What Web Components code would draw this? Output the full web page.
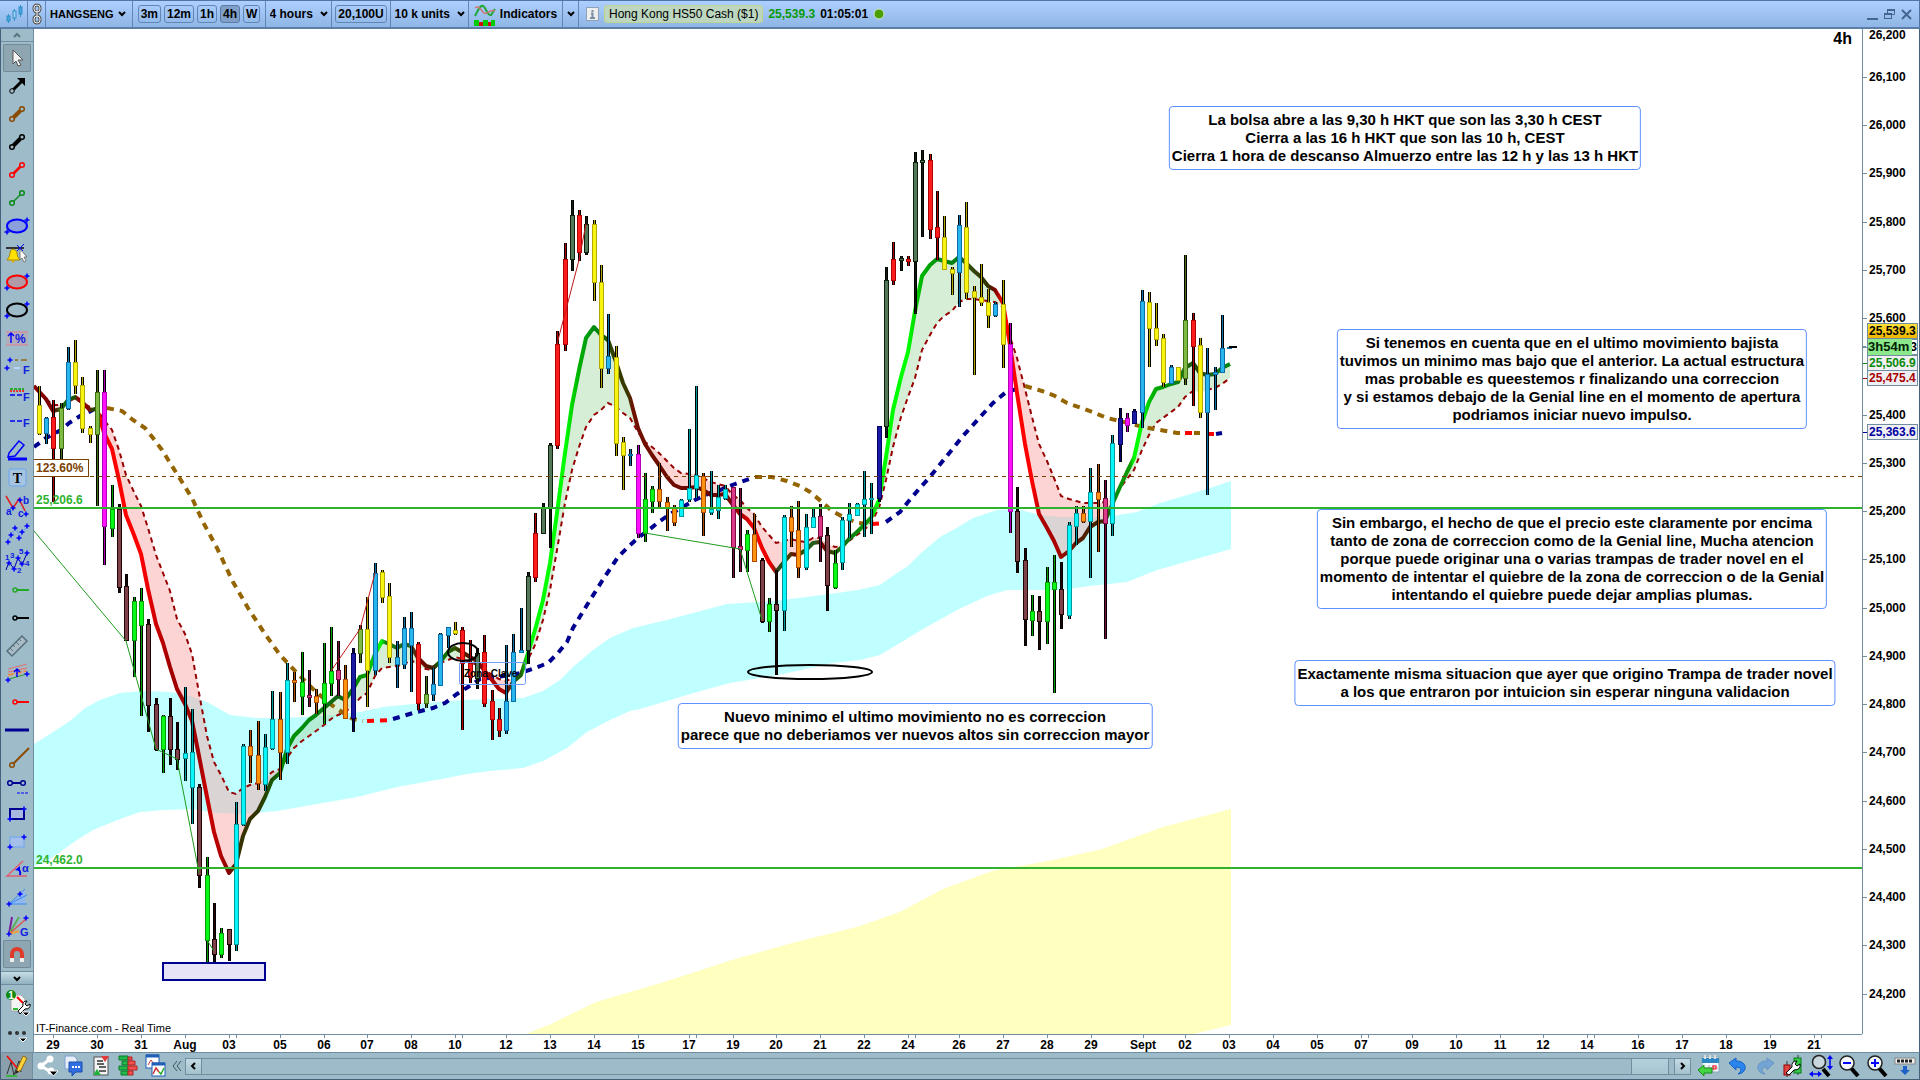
<!DOCTYPE html>
<html lang="en">
<head>
<meta charset="utf-8">
<title>HANGSENG 4h</title>
<style>
body {
    margin: 0;
    min-height: 100vh;
    display: grid;
    grid-template-columns: 34px 1fr;
    grid-template-rows: 29px 1fr 28px;
    font-family: "Liberation Sans", Arial, sans-serif;
    font-size: 12px;
    color: #000;
    --panel: #9dbbc8;
    --line: #718da0;
    --edge: #46607a;
}
title-bar, status-bar { grid-column: 1 / -1; }
</style>
</head>
<body>
<title-bar></title-bar>
<tool-palette></tool-palette>
<price-chart>
    <chart-note x="1405" y="106">La bolsa abre a las 9,30 h HKT que son las 3,30 h CEST<br>Cierra a las 16 h HKT que son las 10 h, CEST<br>Cierra 1 hora de descanso Almuerzo entre las 12 h y las 13 h HKT</chart-note>
    <chart-note x="1572" y="329">Si tenemos en cuenta que en el ultimo movimiento bajista<br>tuvimos un minimo mas bajo que el anterior. La actual estructura<br>mas probable es queestemos r finalizando una correccion<br>y si estamos debajo de la Genial line en el momento de apertura<br>podriamos iniciar nuevo impulso.</chart-note>
    <chart-note x="1572" y="509">Sin embargo, el hecho de que el precio este claramente por encima<br>tanto de zona de correccion como de la Genial line, Mucha atencion<br>porque puede originar una o varias trampas de trader novel en el<br>momento de intentar el quiebre de la zona de correccion o de la Genial<br>intentando el quiebre puede dejar amplias plumas.</chart-note>
    <chart-note x="915" y="703">Nuevo minimo el ultimo movimiento no es correccion<br>parece que no deberiamos ver nuevos altos sin correccion mayor</chart-note>
    <chart-note x="1565" y="660">Exactamente misma situacion que ayer que origino Trampa de trader novel<br>a los que entraron por intuicion sin esperar ninguna validacion</chart-note>
</price-chart>
<status-bar></status-bar>

<template id="title-bar">
<style>
:host {
    display: flex;
    align-items: stretch;
    box-sizing: border-box;
    border-top: 1px solid #4f74a8;
    border-bottom: 2px solid #5b7ea6;
    border-right: 1px solid #4f74a8;
    background: linear-gradient(#adcfff, #8fb6e6);
    font-weight: bold;
    white-space: nowrap;
}
.cell {
    display: flex;
    align-items: center;
    justify-content: center;
    gap: 4px;
    flex: none;
    box-sizing: border-box;
    border-right: 1px solid #5f86b4;
}
button, select {
    font: inherit;
    color: inherit;
    background: none;
    border: 0;
    margin: 0;
    padding: 0;
}
svg { display: block; }
.icon { width: 28px; }
.link { width: 18px; }
.pick { display: grid; align-items: center; padding: 0 4px; }
.pick select, .pick svg { grid-area: 1 / 1; }
.pick select { appearance: none; padding-right: 14px; }
.pick svg { justify-self: end; pointer-events: none; }
.name { font-size: 11px; width: 87px; }
.name svg { margin-right: 2px; }
.frames { gap: 3px; }
.frame {
    height: 18px;
    padding: 0 2px;
    border: 1px solid #5f86b4;
    border-radius: 3px;
}
.frame.on { background: #819fc6; border-color: #5a7ca8; }
.spans { width: 133px; }
.span { width: 66px; }
.units { width: 59px; }
.depth { width: 78px; }
.ind { width: 94px; }
.more { width: 16px; }
.quote { display: flex; align-items: center; gap: 5px; padding-left: 7px; flex: 1; }
.quote .product {
    font-weight: normal;
    height: 16px;
    line-height: 16px;
    padding: 0 4px;
    border: 1px solid #bfd48c;
    border-radius: 3px;
    background: #bcd6c0;
}
.last { color: #0a9a0a; }
.win { display: flex; align-items: center; gap: 4px; padding-right: 6px; }
</style>
<button class="cell icon" aria-label="Chart type"><svg width="18" height="22"><g stroke="#2f8fca" fill="#4aa3d6"><path d="M3.5 11v9M9.5 6v12M15.5 2v12"/><rect x="2" y="13" width="3" height="5"/><rect x="8" y="8" width="3" height="7" fill="#9fd0ee"/><rect x="14" y="4" width="3" height="7"/></g></svg></button>
<button class="cell link" aria-label="Link"><svg width="12" height="22" fill="none"><g stroke="#555" stroke-width="3"><rect x="3" y="2" width="6" height="7" rx="3"/><rect x="3" y="13" width="6" height="7" rx="3"/><path d="M6 7v8"/></g><g stroke="#eee" stroke-width="1"><rect x="3" y="2" width="6" height="7" rx="3"/><rect x="3" y="13" width="6" height="7" rx="3"/><path d="M6 7v8"/></g></svg></button>
<div class="cell pick name"><select aria-label="Instrument"><option>HANGSENG</option></select><svg width="8" height="6"><path d="M1 1l3 3 3-3" fill="none" stroke="#000" stroke-width="2"/></svg></div>
<div class="cell frames spans"><button class="frame">3m</button><button class="frame">12m</button><button class="frame">1h</button><button class="frame on">4h</button><button class="frame">W</button></div>
<div class="cell pick span"><select aria-label="Timeframe"><option>4 hours</option></select><svg width="8" height="6"><path d="M1 1l3 3 3-3" fill="none" stroke="#000" stroke-width="2"/></svg></div>
<div class="cell frames units"><button class="frame">20,100U</button></div>
<div class="cell pick depth"><select aria-label="History"><option>10 k units</option></select><svg width="8" height="6"><path d="M1 1l3 3 3-3" fill="none" stroke="#000" stroke-width="2"/></svg></div>
<button class="cell ind"><svg width="22" height="24"><path d="M1 14C4 8 6 3 9 4s4 10 8 9l4-6" fill="none" stroke="#22a83a" stroke-width="2"/><path d="M1 6c4-3 6 2 9 5s6-5 11-2" fill="none" stroke="#c77" stroke-width="1.5"/><path d="M0 18h5v2h4v-2h5v2h3v-2h4v6H0z" fill="#0c0"/><path d="M5 20h4v4H5zM14 20h3v4h-3z" fill="#c11"/></svg>Indicators</button>
<button class="cell more" aria-label="More indicators"><svg width="8" height="6"><path d="M1 1l3 3 3-3" fill="none" stroke="#000" stroke-width="2"/></svg></button>
<div class="quote">
    <svg width="13" height="14"><rect x=".5" y=".5" width="12" height="13" fill="#eee" stroke="#8fa3b8"/><path d="M6.5 3v2M5 6.5h1.5v4M4 11h5" stroke="#7b8ea3" stroke-width="2" fill="none"/></svg>
    <span class="product">Hong Kong HS50 Cash ($1)</span>
    <span class="last">25,539.3</span>
    <span>01:05:01</span>
    <svg width="12" height="12"><circle cx="6" cy="6" r="5" fill="#4aa000" stroke="#cfe6cf"/></svg>
</div>
<div class="win">
    <button aria-label="Minimise"><svg width="13" height="13"><path d="M1 11h11" stroke="#44658f" stroke-width="2"/></svg></button>
    <button aria-label="Restore"><svg width="13" height="13" fill="none" stroke="#44658f"><path d="M4.5 5V1.5h7v5H9" /><path d="M4 2h8" stroke-width="2"/><rect x="1.5" y="5.5" width="7" height="5"/><path d="M1 6h8" stroke-width="2"/></svg></button>
    <button aria-label="Close"><svg width="13" height="13"><path d="M2 2l9 9M11 2l-9 9" stroke="#44658f" stroke-width="2"/></svg></button>
</div>
</template>

<template id="tool-palette">
<style>
:host {
    display: flex;
    flex-direction: column;
    box-sizing: border-box;
    background: var(--panel);
    border-left: 1px solid var(--edge);
    border-right: 1px solid var(--line);
}
button {
    font: inherit;
    background: none;
    border: 0;
    padding: 0;
    display: grid;
    place-items: center;
}
svg { display: block; overflow: visible; }
.up { height: 13px; border-bottom: 1px solid var(--line); }
.tools { display: grid; grid-auto-rows: 28px; padding: 2px 2px 3px; }
.tools button.on {
    background: #8ea5b2;
    box-shadow: inset 0 0 0 1px #718b9b;
    border-radius: 2px;
}
.down {
    height: 14px;
    background: linear-gradient(#c8dde6, #8fb0be);
    border-top: 1px solid var(--line);
    border-bottom: 1px solid var(--line);
}
.style { height: 36px; }
.dots { flex: 1; }
</style>
<button class="up" aria-label="Scroll up"><svg width="8" height="5"><path d="M1 4l3-3 3 3" fill="none" stroke="#5b7482" stroke-width="2"/></svg></button>
<div class="tools"></div>
<button class="down" aria-label="Scroll down"><svg width="8" height="5"><path d="M1 1l3 3 3-3" fill="none" stroke="#000" stroke-width="2"/></svg></button>
<button class="style" aria-label="Object list"><svg width="28" height="28"><path d="M8 6h10l4 4v12H8z" fill="#f4f4f4" stroke="#aaa"/><path d="M14 8l6 6" stroke="red" stroke-width="2"/><path d="M10 20h5" stroke="#3b3" stroke-width="2"/><path d="M15 22l5-5q-1-5 4-5l-2 3 2 2 3-2q1 5-5 5l-5 5z" fill="#fff" stroke="#000"/><circle cx="8" cy="6" r="5" fill="#118a11"/><text x="8" y="10" font-size="10" font-weight="bold" fill="#fff" text-anchor="middle">1</text><path d="M19 23h8l-4 4z" fill="#000" stroke="#fff"/></svg></button>
<button class="dots" aria-label="More tools"><svg width="28" height="20"><g fill="#333"><circle cx="7" cy="6" r="2"/><circle cx="14" cy="6" r="2"/><circle cx="21" cy="6" r="2"/></g><path d="M16 11h8l-4 4z" fill="#000" stroke="#fff"/></svg></button>
</template>

<template id="status-bar">
<style>
:host {
    display: flex;
    align-items: center;
    box-sizing: border-box;
    background: var(--panel);
    border: 1px solid var(--edge);
    border-top-color: var(--line);
}
button {
    font: inherit;
    background: none;
    border: 0;
    padding: 0;
    width: 27px;
    height: 26px;
    display: grid;
    place-items: center;
    flex: none;
}
svg { display: block; overflow: visible; }
.draw { width: 32px; background: #8aa0ad; border-right: 1px solid var(--line); }
.fold { width: 17px; }
.right button { width: 28px; }
.right { display: flex; padding: 0 0 0 4px; }
.scroll {
    flex: 1;
    display: flex;
    justify-content: space-between;
    box-sizing: border-box;
    height: 17px;
    border: 1px solid var(--line);
    background: var(--panel);
}
.scroll button {
    width: 16px;
    height: 15px;
    background: linear-gradient(#c3dae3, #a3c1cd);
    border-right: 1px solid var(--line);
}
.scroll button:last-child { border-right: 0; border-left: 1px solid var(--line); }
.thumb {
    width: 36px;
    margin-left: auto;
    margin-right: 5px;
    border: 1px solid var(--line);
    border-width: 0 1px;
    background: linear-gradient(#b4d0dc, #a6c4d1);
}
</style>
<button class="draw" aria-label="Drawing tools"><svg width="24" height="24"><path d="M2 20l4-12 3 13 5-14 2 11" fill="none" stroke="#333"/><path d="M2 2l10 12" stroke="red" stroke-width="1.5"/><path d="M1 22h11" stroke="#2b2" stroke-width="1.5"/><path d="M11 19l2-6 5-11 4 2-6 12z" fill="#ffd23c" stroke="#8a6a10"/><path d="M10 20l1-4 3 2z" fill="#222"/></svg></button>
<button aria-label="Share"><svg width="22" height="24"><path d="M14 5L5 12l10 6" fill="none" stroke="#fff" stroke-width="3"/><g fill="#fff"><circle cx="14" cy="5" r="3.5"/><circle cx="5" cy="12" r="3.5"/><circle cx="15" cy="17" r="3.5"/></g><path d="M13 17h9l-4.5 5z" fill="#000" stroke="#fff"/></svg></button>
<button aria-label="Chat"><svg width="22" height="24"><path d="M2 2h9l3 3v10H2z" fill="#e8eef8" stroke="#7b9fd0"/><path d="M6 8h13v10h-6l-4 4v-4H6z" fill="#2f6fe0" stroke="#1c4fb0"/><path d="M9 13h2M12 13h2M15 13h2" stroke="#fff" stroke-width="2"/></svg></button>
<button aria-label="Orders"><svg width="20" height="24"><rect x="3" y="3" width="14" height="18" fill="#f3f3f3" stroke="#555"/><path d="M6 7h6M6 10h7M8 13h7M8 17h7" stroke="#333" stroke-width="1.5"/><path d="M10 2h8l-4 6z" fill="#e23b3b"/><path d="M2 21h8l-4-6z" fill="#22b23a"/></svg></button>
<button aria-label="Order book"><svg width="20" height="24"><path d="M1 2h9v4H1zM4 7h6v4H4zM1 12h9v4H1zM3 17h7v4H3z" fill="#22b84a" stroke="#0b7a2a"/><path d="M10 3h4v3h-4zM10 7h7v4h-7zM10 12h9v4h-9zM10 17h5v4h-5z" fill="#f05050" stroke="#b02020"/></svg></button>
<button aria-label="Windows"><svg width="22" height="24"><rect x="2" y="1" width="13" height="13" fill="#fff" stroke="#1f5fb8"/><path d="M2 2h13" stroke="#1f5fb8" stroke-width="3"/><path d="M4 11l3-5 3 4" fill="none" stroke="#c33"/><rect x="8" y="9" width="13" height="13" fill="#fff" stroke="#1f5fb8"/><path d="M8 10h13" stroke="#1f5fb8" stroke-width="3"/><path d="M9 20l3-6 3 4" fill="none" stroke="#c33" stroke-width="1.5"/><path d="M15 18l2 2 3-6" fill="none" stroke="#2a2" stroke-width="1.5"/></svg></button>
<button class="fold" aria-label="Collapse"><svg width="10" height="10"><path d="M5 0L1 5l4 5M9 0L5 5l4 5" fill="none" stroke="#3d5360"/></svg></button>
<div class="scroll">
    <button aria-label="Scroll left"><svg width="6" height="8"><path d="M4 1L1 4l3 3" fill="none" stroke="#000" stroke-width="2"/></svg></button>
    <div class="thumb"></div>
    <button aria-label="Scroll right"><svg width="6" height="8"><path d="M1 1l3 3-3 3" fill="none" stroke="#000" stroke-width="2"/></svg></button>
</div>
<div class="right">
    <button aria-label="Go to date"><svg width="24" height="24"><rect x="5" y="3" width="17" height="15" fill="#f4f8fb" stroke="#8ab"/><path d="M5 4h17v5H5z" fill="#2c86c4"/><path d="M8 1v4M13 1v4M18 1v4" stroke="#ddd" stroke-width="2"/><path d="M12 11v7M16 11v7M7 14h14" stroke="#aac"/><rect x="16" y="12" width="3" height="3" fill="none" stroke="red"/><path d="M1 16l6-5v3h8v5H7v3z" fill="#44d444" stroke="#189018"/></svg></button>
    <button aria-label="Undo"><svg width="18" height="20"><path d="M1 7l7-5v3c8 0 10 5 9 8s-4 5-7 5c4-3 4-7-2-7v3z" fill="#2a86ee" stroke="#1560c0"/></svg></button>
    <button aria-label="Redo"><svg width="18" height="20" opacity=".5"><path d="M18 7l-7-5v3c-8 0-10 5-9 8s4 5 7 5c-4-3-4-7 2-7v3z" fill="#4a8ee0" stroke="#3570c0"/></svg></button>
    <button aria-label="Chart settings"><svg width="22" height="24"><path d="M5 7v16M16 1v20" stroke="#333"/><rect x="2" y="11" width="6" height="10" fill="#e04444" stroke="#900"/><rect x="12" y="4" width="7" height="15" fill="#33c944" stroke="#0a7a1a"/><path d="M4 19l6-6q-1-6 5-6l-2 3 2 2 3-2q1 6-6 6l-5 5z" fill="#fff" stroke="#000"/></svg></button>
    <button aria-label="Fit"><svg width="24" height="24"><path d="M14 15l6 7" stroke="#000" stroke-width="4"/><circle cx="10" cy="8" r="6.5" fill="#c9d8df" stroke="#222" stroke-width="1.5"/><path d="M21 4v9M3 20h8" stroke="#00f" stroke-width="1.5"/><path d="M18 5l3-4 3 4zM18 12l3 4 3-4zM4 17l-4 3 4 3zM9 17l4 3-4 3z" fill="#00f"/></svg></button>
    <button aria-label="Zoom out"><svg width="22" height="24"><path d="M13 14l7 8" stroke="#000" stroke-width="4"/><circle cx="9" cy="9" r="7" fill="#f2f6f8" stroke="#222" stroke-width="1.5"/><path d="M5 9h8" stroke="#00f" stroke-width="2"/></svg></button>
    <button aria-label="Zoom in"><svg width="22" height="24"><path d="M13 14l7 8" stroke="#000" stroke-width="4"/><circle cx="9" cy="9" r="7" fill="#f2f6f8" stroke="#222" stroke-width="1.5"/><path d="M5 9h8M9 5v8" stroke="#00f" stroke-width="2"/></svg></button>
    <button aria-label="Toolbar options"><svg width="20" height="20"><rect x="0" y="2" width="20" height="6" fill="#eee" stroke="#888"/><path d="M2 5h16" stroke="#222" stroke-width="3" stroke-dasharray="3 1"/><path d="M8 10h4v4h3l-5 5-5-5h3z" fill="#1f62c8"/></svg></button>
</div>
</template>

<template id="price-chart">
<style>
:host {
    display: grid;
    grid-template-columns: 1fr 58px;
    grid-template-rows: 1fr 18px;
    background: #fff;
    font-weight: bold;
}
.plot { position: relative; overflow: hidden; }
.plot svg { position: absolute; inset: 0; width: 100%; height: 100%; }
.frame { position: absolute; top: 0; right: 10px; font-size: 16px; line-height: 20px; }
.credit { position: absolute; left: 2px; bottom: 0; font-size: 11px; font-weight: normal; line-height: 12px; }
.level { position: absolute; left: 2px; line-height: 14px; transform: translateY(-100%); color: #2fb32f; }
.fib {
    position: absolute;
    left: 0;
    padding: 0 5px 0 2px;
    line-height: 16px;
    color: #7a4000;
    background: #fff;
    border: 1px solid #7a4000;
    border-left: 0;
}
.prices { position: relative; border-left: 1px solid var(--line); border-right: 1px solid var(--edge); }
.prices span { position: absolute; left: 6px; line-height: 14px; transform: translateY(-50%); }
.prices span::before {
    content: "";
    position: absolute;
    left: -6px;
    top: 7px;
    width: 4px;
    height: 1px;
    background: var(--tick, #718da0);
}
.prices span.first { top: 0; line-height: 12px; transform: none; }
.prices span.first::before { display: none; }
.prices span.tag {
    left: 4px;
    right: 1px;
    padding-left: 1px;
    border: 1px solid #718da0;
    background: #f0f0f4;
}
.prices span.tag::before { left: -5px; }
.prices span.now { background: linear-gradient(#ffe23a, #f0b400); }
.prices span.now::before { display: none; }
.prices span.rest { background: #fff; text-align: right; }
.prices span.timer {
    left: 5px;
    right: 7px;
    font-size: 13px;
    line-height: 16px;
    background: #8be88b;
    color: #002000;
}
.times { grid-column: 1 / -1; display: grid; grid-template-columns: 1fr 58px; }
.times .row { position: relative; border-top: 1px solid var(--line); }
.times .row + .row { border-top: 0; border-right: 1px solid var(--edge); }
.times span { position: absolute; top: 3px; line-height: 14px; transform: translateX(-50%); }
.times i { position: absolute; top: 0; width: 1px; height: 3px; background: var(--line); }
</style>
<div class="plot">
    <svg viewBox="34 29 1828 1005" preserveAspectRatio="none"></svg>
    <div class="frame">4h</div>
    <div class="credit">IT-Finance.com - Real Time</div>
    <slot></slot>
</div>
<div class="prices"></div>
<div class="times"><div class="row"></div><div class="row"></div></div>
</template>

<template id="chart-note">
<style>
:host {
    position: absolute;
    transform: translateX(-50%);
    box-sizing: border-box;
    padding: 4px 2px;
    border: 1px solid #5c8fff;
    border-radius: 4px;
    background: #fff;
    font-size: 15px;
    font-weight: bold;
    line-height: 18px;
    text-align: center;
    white-space: nowrap;
}
</style>
<slot></slot>
</template>

<script>
// plot extents, in chart units
const PLOT = { x: 34, y: 29, w: 1828, h: 1005 };
const pctX = x => ((x - PLOT.x) / PLOT.w * 100) + '%';
const pctY = y => ((y - PLOT.y) / PLOT.h * 100) + '%';
const priceY = p => 125 + (26000 - p) * 0.4826;

class Base extends HTMLElement {
    constructor() {
        super();
        const template = document.getElementById(this.localName);
        this.attachShadow({ mode: 'open' }).appendChild(template.content.cloneNode(true));
    }
    $(sel) { return this.shadowRoot.querySelector(sel); }
}

class TitleBar extends Base {}
class StatusBar extends Base {}

// ---- drawing tools ----
const plus = (x, y, c = '#00f') => `<path d="M${x - 2.5} ${y}h5M${x} ${y - 2.5}v5" stroke="${c}" stroke-width="1.5"/>`;
const segment = (c, w) => `<path d="M10 18L19 9" stroke="${c}" stroke-width="${w}"/><g fill="#9dbbc8" stroke="${c}" stroke-width="1.5"><circle cx="9" cy="19" r="2.3"/><circle cx="19" cy="9" r="2.3"/></g>`;
const oval = (c, f) => `<ellipse cx="14" cy="14" rx="10" ry="6.5" fill="${f}" stroke="${c}" stroke-width="2"/>${plus(24, 8)}${plus(4, 20)}`;
const ray = c => `<path d="M14 14h12" stroke="${c}" stroke-width="2"/><circle cx="12" cy="14" r="2" fill="none" stroke="${c}" stroke-width="1.5"/>`;
const glyph = (x, y, t, s = 10, c = '#1020e0') => `<text x="${x}" y="${y}" font-size="${s}" font-weight="bold" fill="${c}">${t}</text>`;

const TOOLS = [
    ['Cursor', '<path d="M10 6v14l3-3 2 5 3-1-3-5h5z" fill="#f4f4f4" stroke="#555"/>', true],
    ['Arrow', '<path d="M10 18L19 9" stroke="#000" stroke-width="3"/><path d="M14 6h8v8z"/><circle cx="9" cy="19" r="2.3" fill="#9dbbc8" stroke="#000"/>'],
    ['Segment 1', segment('#8a4a00', 4)],
    ['Segment 2', segment('#000', 4)],
    ['Segment 3', segment('#f00', 2.5)],
    ['Segment 4', segment('#0a8a1a', 1.5)],
    ['Ellipse 1', oval('#00f', '#8aa0dc')],
    ['Alert', '<path d="M3 8h18" stroke="#333" stroke-width="2"/><path d="M4 20q3-3 3-7 0-3 3-4 4 1 4 4 0 4 3 7z" fill="#ffe000" stroke="#a80"/><circle cx="10" cy="21" r="1.5" fill="#da0"/><path d="M14 5l6 6M21 4l-7 7" stroke="#00f"/><path d="M17 9v11l2-2 2 4 2-1-2-4h3z" fill="#fff" stroke="#777"/>'],
    ['Ellipse 2', oval('#f00', '#b09aa6')],
    ['Ellipse 3', oval('#000', 'none')],
    ['Variation', '<rect x="3" y="8" width="22" height="13" fill="#b0aebd"/><path d="M3 8h22M3 21h22" stroke="#e0808c"/><path d="M8 19v-9M5 12l3-3 3 3" stroke="#00f" stroke-width="1.5" fill="none"/>' + glyph(12, 19, '%', 12)],
    ['Fibonacci 1', plus(7, 8) + plus(4, 16) + '<path d="M12 8h3M18 8h6" stroke="#96661a" stroke-width="1.5"/><path d="M11 16h6" stroke="#b6d4ff" stroke-width="2"/>' + glyph(20, 22, 'F', 11)],
    ['Fibonacci 2', '<path d="M7 9h14" stroke="#0a0" stroke-width="1.5" stroke-dasharray="3 1"/><path d="M7 11h14" stroke="#f00" stroke-width="1.5" stroke-dasharray="2 1"/><path d="M7 15h5M14 15h5" stroke="#00f" stroke-width="1.5"/>' + glyph(20, 21, 'F', 11)],
    ['Fibonacci 3', '<path d="M7 13h5M14 13h5" stroke="#00f" stroke-width="1.5"/>' + glyph(20, 19, 'F', 11)],
    ['Pencil', '<path d="M6 17L16 5l5 4-9 11-7 1z" fill="#9dbbc8" stroke="#00f" stroke-width="1.5"/><path d="M5 23h19" stroke="#00f" stroke-width="3"/>'],
    ['Text', '<rect x="6" y="5" width="17" height="17" rx="2" fill="#a5c4e0" stroke="#6fa4f0"/><text x="14.5" y="19" font-size="14" font-weight="bold" text-anchor="middle" font-family="Liberation Serif, serif">T</text>'],
    ['Waves abc', '<path d="M3 4l7 12 6-9 6 12" fill="none" stroke="#e02020" stroke-width="1.5"/>' + plus(10, 16) + plus(17, 8) + glyph(3, 23, 'a') + glyph(20, 12, 'b') + glyph(15, 25, 'c') + plus(23, 22)],
    ['Polyline', '<path d="M4 22l4-7 5-7 4 10 3-7 5-5" fill="none" stroke="#6f9cf0"/>' + plus(5, 22) + plus(8, 15) + plus(12, 8) + plus(16, 18) + plus(19, 12) + plus(24, 6)],
    ['Waves 12345', '<path d="M3 22l3-8 5 7 4-11 4 7 5-12" fill="none" stroke="#00a"/>' + plus(6, 15) + plus(11, 21) + plus(15, 10) + plus(19, 16) + plus(24, 5) + glyph(2, 12, 1, 8) + glyph(7, 10, 3, 8) + glyph(16, 6, 5, 8) + glyph(14, 25, 2, 8) + glyph(22, 18, 4, 8)],
    ['Ray 1', ray('#22aa22')],
    ['Ray 2', ray('#000')],
    ['Ruler', '<path d="M4 19L19 4l5 5L9 24z" fill="#a9bcc6" stroke="#56707e" stroke-width="1.5"/><path d="M7 16l3 3M10 13l2 2M13 10l3 3M16 7l2 2" stroke="#56707e"/>'],
    ['Channel', '<path d="M4 18L24 13V6L5 11z" fill="#b0b4bb"/><path d="M5 9l19-5M5 12l19-4" stroke="#e07070"/><path d="M5 15l18-4" stroke="#f08a30" stroke-width="1.5" stroke-dasharray="6 2"/><path d="M6 19l18-5" stroke="#2b9a2b"/><path d="M14 17V9M11 12l3-3 3 3" stroke="#00f" stroke-width="1.5" fill="none"/>' + plus(5, 20) + plus(24, 14)],
    ['Ray 3', ray('#f00')],
    ['Horizontal line', '<path d="M2 14h24" stroke="#000090" stroke-width="3"/>'],
    ['Half line', '<path d="M10 20L26 4" stroke="#8a4a00" stroke-width="2"/><circle cx="9" cy="21" r="2.3" fill="none" stroke="#8a4a00" stroke-width="1.5"/>'],
    ['Horizontal segment', '<path d="M9 11h9" stroke="#000090" stroke-width="2"/><g fill="none" stroke="#000090" stroke-width="1.5"><circle cx="7" cy="11" r="2.3"/><circle cx="20" cy="11" r="2.3"/></g><path d="M14 21h12" stroke="#00f" stroke-dasharray="3 1"/>'],
    ['Rectangle 1', '<rect x="7" y="9" width="14" height="10" fill="#a8b8e0" stroke="#000090" stroke-width="2"/>' + plus(21, 9) + plus(7, 19)],
    ['Rectangle 2', '<rect x="7" y="9" width="14" height="10" fill="#a5c0e8" stroke="#6fa4f0"/>' + plus(21, 9) + plus(7, 19)],
    ['Angle', '<path d="M20 5L4 20h20" fill="none" stroke="#e06070" stroke-width="1.5"/><path d="M17 19q1-4-2-6" fill="none" stroke="#00f" stroke-width="2"/><path d="M12 14l5-4v5z" fill="#00f"/>' + glyph(19, 16, 'α', 11)],
    ['Fan', '<path d="M6 20L22 6v14z" fill="#8fb8ee"/><path d="M6 20L22 5M6 20l18-9M6 20h18" stroke="#3c8cf0"/>' + plus(6, 20) + plus(17, 10)],
    ['Gann fan', '<path d="M6 22L9 5" stroke="#7a20a0" stroke-width="2"/><path d="M6 22l10-17" stroke="#5ab05a" stroke-width="2"/><path d="M6 22L23 7" stroke="#e05050" stroke-width="1.5"/><path d="M6 22l10-3" stroke="#f0a030" stroke-width="2"/>' + plus(6, 22) + plus(23, 6) + glyph(17, 24, 'G', 11)],
    ['Magnet', '<path d="M9 21v-7a5 5 0 0 1 10 0v7" fill="none" stroke="#e03a2a" stroke-width="4"/><path d="M9 18v4M19 18v4" stroke="#eee" stroke-width="4"/>', true]
];

class ToolPalette extends Base {
    connectedCallback() {
        this.$('.tools').innerHTML = TOOLS.map(([name, art, on]) =>
            `<button aria-label="${name}"${on ? ' class="on"' : ''}><svg width="28" height="28" viewBox="0 0 28 28">${art}</svg></button>`).join('');
    }
}

class ChartNote extends Base {
    connectedCallback() {
        this.style.left = pctX(+this.getAttribute('x'));
        this.style.top = pctY(+this.getAttribute('y'));
    }
}

// ---- chart data ----
// fill, border, wick core
const PAINT = {
    Y: ['#f7f412', '#b5a800', '#b5a800'],
    B: ['#27b5ee', '#0b6ea6', '#0b6ea6'],
    R: ['#ff1c1c', '#b00000', '#b00000'],
    G: ['#7fba45', '#3f7010', '#3f7010'],
    M: ['#ff10ff', '#b400b4', '#b400b4'],
    L: ['#08f818', '#00a000', '#00a000'],
    W: ['#80424a', '#200505', '#200505'],
    C: ['#08f6fa', '#009a9e', '#009a9e'],
    O: ['#ff920f', '#b04c00', '#b04c00'],
    P: ['#dc3a88', '#7a0a40', '#7a0a40'],
    N: ['#1a1aa4', '#000060', '#000060'],
    D: ['#55785a', '#0c200c', '#0c200c']
};

// x, high, body top, body bottom, low, paint
const CANDLES = `39 386 405 433 435 Y|46 417 418 433 444 B|53 400 417 448 502 R|61 403 408 448 463 G|68 347 362 408 410 B|75 340 362 385 394 Y|82 377 385 428 433 Y|90 426 428 434 443 Y|97 370 392 434 506 G|104 370 392 526 565 M|112 485 509 528 537 L|119 504 509 587 593 W|126 574 586 640 641 W|134 597 601 640 677 L|141 588 601 625 716 L|148 619 624 705 732 W|156 698 704 749 751 W|163 715 716 749 773 L|170 698 716 749 765 W|177 722 749 759 770 W|185 687 753 758 781 C|192 709 752 787 824 C|199 784 787 875 888 W|207 857 875 940 968 L|214 903 939 954 970 W|221 928 933 954 958 L|229 929 929 944 961 W|236 802 824 944 951 C|243 744 746 824 826 C|250 730 746 755 783 O|258 721 755 783 790 O|265 734 747 784 791 C|272 691 719 748 750 C|280 692 719 752 780 O|287 663 680 752 764 C|294 672 680 682 702 O|302 652 682 696 715 L|309 670 695 697 707 P|316 689 696 702 714 O|324 643 683 703 724 L|331 627 671 683 696 L|338 641 670 679 696 P|345 665 679 718 719 O|353 648 653 718 732 N|360 625 629 653 663 G|367 597 629 670 707 Y|375 563 573 670 675 B|382 570 572 597 603 Y|389 583 596 657 663 Y|397 641 657 664 688 B|404 617 628 664 669 B|411 612 628 645 692 B|418 642 644 703 710 R|426 676 694 703 708 G|433 668 684 694 701 B|440 633 634 685 686 B|448 627 627 635 648 B|455 622 630 633 635 Y|462 627 630 663 730 R|470 640 663 677 683 R|477 648 653 678 689 D|484 635 652 703 707 R|492 690 701 719 740 R|499 708 719 730 737 R|506 645 701 730 734 B|513 634 652 701 702 B|521 608 650 652 653 B|528 572 576 650 664 D|535 513 533 577 582 R|543 503 508 533 533 D|550 443 445 508 548 D|557 331 344 445 449 R|565 243 259 344 351 R|572 200 215 259 271 D|579 210 215 252 261 R|586 216 224 252 255 D|594 220 224 282 301 Y|601 265 282 368 388 Y|608 314 356 368 374 B|616 346 357 443 456 Y|623 437 442 455 490 Y|630 449 454 455 466 B|638 445 454 533 538 M|645 473 499 533 542 L|652 486 489 501 513 L|659 463 489 501 507 O|667 497 502 507 531 O|674 505 507 522 526 O|681 499 500 516 516 C|689 429 488 499 502 C|696 386 475 488 498 C|703 473 476 512 536 O|711 471 509 512 515 C|718 485 497 510 519 C|725 485 489 498 500 C|733 487 487 547 578 P|740 488 546 549 572 P|747 530 534 550 572 L|754 514 534 561 562 O|762 558 560 621 623 W|769 598 604 621 632 L|776 570 604 610 675 W|784 515 517 610 631 C|791 506 517 531 547 O|798 501 530 567 578 O|806 514 527 567 570 C|813 508 517 527 527 C|820 504 516 536 562 P|827 527 535 585 611 W|835 550 563 587 589 L|842 517 520 562 570 C|849 503 514 520 538 C|857 503 504 515 515 C|864 471 499 504 537 C|871 483 498 499 534 C|879 426 426 498 502 N|886 267 280 426 438 D|893 242 259 280 285 R|901 256 258 260 271 D|908 256 259 261 266 R|915 152 162 261 314 D|922 150 160 162 237 D|930 154 160 229 239 R|937 191 227 237 260 R|944 216 237 269 270 Y|952 267 269 273 295 Y|959 215 225 272 307 B|966 202 227 292 299 Y|974 286 291 297 375 Y|981 264 297 302 306 Y|988 289 302 315 328 Y|995 302 304 315 317 B|1003 280 304 344 368 Y|1010 323 344 511 533 M|1017 487 511 561 573 W|1025 548 560 619 646 W|1032 595 611 620 636 L|1039 596 611 621 650 W|1047 567 582 621 644 L|1054 555 582 589 693 L|1061 562 589 614 629 W|1069 522 525 615 619 C|1076 506 513 526 545 C|1083 506 513 521 523 O|1090 468 492 521 578 C|1098 464 492 499 552 O|1105 480 498 523 639 P|1112 435 443 523 536 C|1120 408 418 444 462 N|1127 413 418 425 432 M|1134 409 411 423 424 N|1142 290 301 412 428 B|1149 292 302 328 367 Y|1156 303 328 339 346 Y|1163 334 338 382 387 Y|1171 365 367 383 383 B|1178 367 367 380 380 Y|1185 255 320 378 385 G|1193 313 320 346 406 R|1200 338 345 412 418 Y|1207 348 374 412 495 B|1215 367 372 374 410 B|1222 315 348 372 372 B`
    .split('|').map(r => r.split(' '));

// x, fast average, slow average
const AVERAGES = `34 386 386|46 399 399|53 411 405|61 409 405|68 400 402|75 397 398|82 402 403|90 410 407|97 409 409|104 433 420|112 449 430|119 480 450|126 515 475|134 535 492|141 554 506|148 589 528|156 624 555|163 643 573|170 667 591|177 689 619|185 704 634|192 721 654|199 756 693|207 797 736|214 832 762|221 856 775|229 873 792|236 864 794|243 836 788|250 819 785|258 811 783|265 797 779|272 780 772|280 773 769|287 749 758|294 736 748|302 728 741|309 720 736|316 715 731|324 708 725|331 702 719|338 696 715|345 700 712|353 689 706|360 677 698|367 675 693|375 654 676|382 641 668|389 644 667|397 648 666|404 644 665|411 646 659|418 658 667|426 666 669|433 668 670|440 662 663|448 652 660|455 648 657|462 652 659|470 657 662|477 661 665|484 670 669|492 680 675|499 689 679|506 693 681|513 682 678|521 675 672|528 653 660|535 630 645|543 600 620|550 563 590|557 513 550|565 453 503|572 405 470|579 370 447|586 338 427|594 327 415|601 335 410|608 340 403|616 362 407|623 383 413|630 398 418|638 428 432|645 444 442|652 455 447|659 465 453|667 477 461|674 485 468|681 488 473|689 488 474|696 487 475|703 490 478|711 495 482|718 495 484|725 494 486|733 505 495|740 514 500|747 519 508|754 528 514|762 548 527|769 562 535|776 572 543|784 562 541|791 554 539|798 555 541|806 550 542|813 543 538|820 542 538|827 551 544|835 553 547|842 547 546|849 539 541|857 532 535|864 525 530|871 518 523|879 500 508|886 457 480|893 410 447|901 377 417|908 352 397|915 311 378|922 276 350|930 265 335|937 259 323|944 261 316|952 263 311|959 257 302|966 263 299|974 271 299|981 277 300|988 286 301|995 290 302|1003 303 307|1010 345 337|1017 393 358|1025 444 389|1032 481 417|1039 514 444|1047 528 461|1054 541 478|1061 557 496|1069 551 499|1076 543 501|1083 538 503|1090 527 503|1098 522 503|1105 521 502|1112 505 498|1120 487 488|1127 472 479|1134 458 470|1142 422 450|1149 402 435|1156 389 423|1163 387 418|1171 384 412|1178 382 407|1185 368 397|1193 363 391|1200 373 392|1207 375 390|1215 374 388|1222 368 384|1230 364 378`
    .split('|').map(r => r.split(' ').map(Number));

// trend tint of the fast average along x
const TINT = '34 8b0000,53 7a0000,61 1f6a1f,68 0a6a0a,75 205000,78 8b0000,88 8b0000,93 205000,97 502000,100 ff0000,141 ff0000,170 a00000,199 a00000,207 cc0000,221 b00000,229 800000,236 3a3000,258 303500,275 145a00,285 009000,316 008a10,338 106010,345 107010,367 00a000,375 00e000,381 00ff00,386 107a10,411 206020,418 8b0000,433 402000,440 008000,455 305000,462 402800,477 7a0000,490 b00000,506 a00000,513 205020,521 206000,528 00ff00,565 00ff00,579 00b000,586 00a010,600 007a10,612 304000,628 3a3800,633 701000,725 6a0500,740 a00000,754 ff0000,772 e00000,778 205020,787 3a5000,795 6a0800,800 305000,815 206020,823 7a0500,835 206000,849 107a10,871 00a000,876 00ff00,908 00ff00,922 00b400,937 009010,959 007a10,966 305010,988 303000,995 7a0500,1003 ff0000,1032 ff0000,1042 aa0000,1058 aa0000,1066 801000,1083 502000,1104 402800,1112 008a10,1130 0a9a00,1134 00ff00,1142 00ff00,1152 00b400,1178 0a8010,1193 205a10,1200 304000,1215 107010,1230 008a10'
    .split(',').map(s => s.split(' '));

const BASELINE = [
    ['#000090', '34,447 46,438 61,430 69,423 80,416 93,410'],
    ['#946400', '107,408 122,411 133,420 145,428 153,438 162,450 177,474 192,498 203,522 217,548 233,582 248,608 265,634 280,655 297,673 313,689 330,704 342,712 353,719 363,721'],
    ['#ff0000', '367,721 390,720'],
    ['#000090', '393,719 413,713 433,708 445,703 457,694 468,687 480,679 497,677 517,674 535,668 548,663 558,653 567,642 573,628 587,605 602,581 618,557 628,547 638,538 650,529 660,521 672,513 695,500 710,493 720,490 735,484 752,478'],
    ['#946400', '755,477 772,477 787,481 800,486 810,492 822,502 832,511 845,518 858,523 870,524'],
    ['#ff0000', '872,524 884,523'],
    ['#000090', '886,522 900,512 908,502 919,489 929,478 946,457 963,436 982,415 993,403 1005,393 1019,388'],
    ['#946400', '1025,386 1042,391 1055,396 1067,403 1090,411 1107,418 1120,421 1143,427 1160,430 1177,433 1180,433'],
    ['#ff0000', '1185,433 1192,433'],
    ['#946400', '1194,433 1200,433'],
    ['#ff0000', '1208,434 1214,434'],
    ['#000090', '1216,434 1222,433']
];

const CLOUD = '34,744 50,734 70,721 85,708 100,700 120,693 143,691 170,692 187,695 207,702 230,715 257,718 283,718 323,716 360,712 383,707 423,703 463,700 523,698 543,691 560,680 573,667 593,650 610,638 633,628 667,620 697,612 727,604 760,602 783,600 837,593 858,590 880,585 897,573 908,566 920,554 940,537 953,530 973,518 997,510 1017,509 1040,515 1060,517 1093,517 1113,516 1137,512 1160,503 1177,498 1207,489 1231,481 1231,549 1203,557 1157,570 1127,582 1090,586 1060,590 1007,590 987,596 957,610 923,629 900,643 880,655 860,660 833,663 783,674 730,683 697,692 640,709 630,711 610,720 587,732 567,748 543,761 523,768 490,771 467,774 447,778 397,787 357,797 317,804 277,811 243,814 217,813 193,809 163,810 140,812 120,819 93,830 77,840 50,859 34,866';
const CLOUD_LOW = '526,1034 551,1024 596,1002 661,983 735,959 796,942 857,927 900,912 943,889 992,871 1053,860 1102,849 1163,827 1231,809 1231,1025 1194,1034';

const DAYS = '53 29|97 30|141 31|185 Aug|229 03|280 05|324 06|367 07|411 08|455 10|506 12|550 13|594 14|638 15|689 17|733 19|776 20|820 21|864 22|908 24|959 26|1003 27|1047 28|1091 29|1143 Sept|1185 02|1229 03|1273 04|1317 05|1361 07|1412 09|1456 10|1500 11|1543 12|1587 14|1638 16|1682 17|1726 18|1770 19|1814 21'
    .split('|').map(s => s.split(' '));
const WEEK_STARTS = [236, 462, 696, 915, 1368, 1594, 1821];

const line = (pts, stroke, width, extra = '') =>
    `<polyline points="${pts}" fill="none" stroke="${stroke}" stroke-width="${width}" ${extra}/>`;

class PriceChart extends Base {
    connectedCallback() {
        this.drawPlot();
        this.drawPrices();
        this.drawTimes();
    }

    ribbon() {
        let out = '';
        for (let i = 1; i < AVERAGES.length; i++) {
            const [x0, f0, s0] = AVERAGES[i - 1];
            const [x1, f1, s1] = AVERAGES[i];
            const fill = f0 + f1 < s0 + s1 ? '#a9dba9' : '#fba6a6';
            out += `<path d="M${x0} ${f0}L${x1} ${f1}V${s1}L${x0} ${s0}z" fill="${fill}"/>`;
        }
        return `<g opacity=".47" shape-rendering="crispEdges">${out}</g>`;
    }

    candle([x, high, top, bottom, low, key]) {
        const [fill, border, core] = PAINT[key];
        const h = Math.max(bottom - top, 1);
        return `<rect x="${x - 1}" y="${high}" width="3" height="${Math.max(low - high, h)}" fill="#000"/>` +
            `<rect x="${x}" y="${high}" width="1" height="${Math.max(low - high, h)}" fill="${core}"/>` +
            `<rect x="${x - 2}" y="${top}" width="5" height="${h + 1}" fill="${border}"/>` +
            `<rect x="${x - 1}" y="${+top + 1}" width="3" height="${Math.max(h - 1, 0)}" fill="${fill}"/>`;
    }

    drawPlot() {
        const fast = AVERAGES.map(a => a[0] + ',' + a[1]).join(' ');
        const slow = AVERAGES.map(a => a[0] + ',' + a[2]).join(' ');
        const stops = TINT.map(([x, c]) => `<stop offset="${(x - 34) / 1196}" stop-color="#${c}"/>`).join('');
        this.$('svg').innerHTML = `
            <defs><linearGradient id="tint" gradientUnits="userSpaceOnUse" x1="34" y1="0" x2="1230" y2="0">${stops}</linearGradient></defs>
            <polygon points="${CLOUD_LOW}" fill="#ffffbf"/>
            <polygon points="${CLOUD}" fill="#bfffff"/>
            ${this.ribbon()}
            ${line(slow, '#960000', 2, 'stroke-dasharray="5 4"')}
            ${BASELINE.map(([c, p]) => line(p, c, 4, 'stroke-dasharray="7 6"')).join('')}
            ${line(fast, 'url(#tint)', 4, 'stroke-linejoin="round"')}
            <g shape-rendering="crispEdges">${CANDLES.map(c => this.candle(c)).join('')}</g>
            <rect x="459.5" y="662.5" width="66" height="22" rx="2" fill="none" stroke="#6f9cf5"/>
            <text x="464" y="677" font-size="10">Zona Clave</text>
            ${line('34,531 126,641 156,749 177,759 199,873', '#1f9a1f', 1)}
            ${line('207,940 214,951', '#1f9a1f', 1)}
            ${line('645,533 740,549 762,620', '#1f9a1f', 1)}
            ${line('331,671 360,629 375,573', '#c01818', 1)}
            ${line('557,344 579,260 586,224', '#c01818', 1)}
            ${line('1227,348 1232,348', '#0b6ea6', 2)}
            ${line('1229,347 1237,347', '#000', 2)}
            <rect x="163" y="963" width="102" height="17" fill="#e6e4f6" stroke="#000090" stroke-width="2"/>
            <ellipse cx="463" cy="652" rx="15" ry="9" fill="none" stroke="#000" stroke-width="2"/>
            <ellipse cx="810" cy="672" rx="62" ry="7" fill="none" stroke="#000" stroke-width="2"/>
            <path d="M34 476.5H1862" stroke="#7a4000" stroke-dasharray="4 4"/>
            <path d="M34 508H1862M34 868H1862" stroke="#2fb32f" stroke-width="2"/>`;
        this.$('.plot').insertAdjacentHTML('beforeend',
            `<div class="level" style="top:${pctY(507)}">25,206.6</div>` +
            `<div class="level" style="top:${pctY(867)}">24,462.0</div>` +
            `<div class="fib" style="top:${pctY(459)}">123.60%</div>`);
    }

    drawPrices() {
        let out = '<span class="first">26,200</span>';
        for (let p = 26100; p >= 24200; p -= 100) {
            if (p !== 25500) out += `<span style="top:${pctY(priceY(p))}">${p.toLocaleString('en-US')}</span>`;
        }
        out += `<span class="tag rest" style="top:${pctY(347)}">3</span>
            <span class="tag" style="top:${pctY(363)};color:#0a8a0a;--tick:#0a8a0a">25,506.9</span>
            <span class="tag" style="top:${pctY(378)};color:#a80000;--tick:#a80000">25,475.4</span>
            <span class="tag" style="top:${pctY(432)};color:#0000a0;--tick:#0000a0">25,363.6</span>
            <span class="tag now" style="top:${pctY(331)}">25,539.3</span>
            <span class="timer" style="top:${pctY(347)}">3h54m</span>`;
        this.$('.prices').innerHTML = out;
    }

    drawTimes() {
        this.$('.times .row').innerHTML =
            DAYS.map(([x, d]) => `<i style="left:${pctX(x)}"></i><span style="left:${pctX(x)}">${d}</span>`).join('') +
            WEEK_STARTS.map(x => `<i style="left:${pctX(x)}"></i>`).join('');
    }
}

customElements.define('title-bar', TitleBar);
customElements.define('tool-palette', ToolPalette);
customElements.define('chart-note', ChartNote);
customElements.define('price-chart', PriceChart);
customElements.define('status-bar', StatusBar);
</script>
</body>
</html>
